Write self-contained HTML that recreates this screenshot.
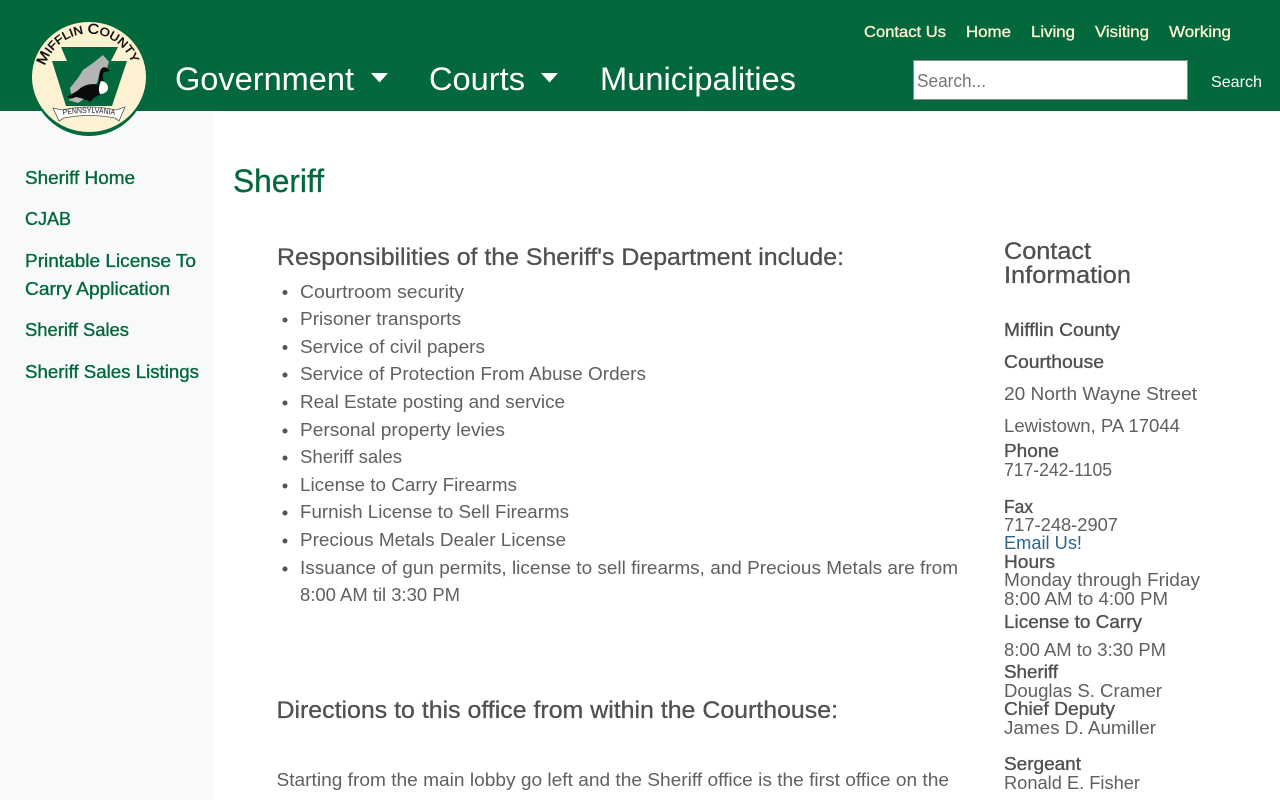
<!DOCTYPE html>
<html lang="en"><head><meta charset="utf-8"><title>Sheriff - Mifflin County</title>
<style>
html,body{margin:0;padding:0;width:1280px;height:800px;overflow:hidden;background:#fff}
svg{display:block}
text{font-family:"Liberation Sans",sans-serif;font-size:18px;fill:#606060}
.g{fill:#03683c;stroke:#03683c;stroke-width:.35}
.b{fill:#505050;stroke:#505050;stroke-width:.35}
.h{font-size:24px;fill:#505050;stroke:#505050;stroke-width:.3}
.t{font-size:16px;fill:#fbf3cf;stroke:#fbf3cf;stroke-width:.35}
.n{font-size:32px;fill:#fff}
</style></head><body>
<svg width="1280" height="800" viewBox="0 0 1280 800" xmlns="http://www.w3.org/2000/svg">
<rect x="0" y="111" width="213" height="689" fill="#f8f9fa"/>
<rect width="1280" height="111" fill="#03683c"/>

<!-- logo -->
<circle cx="89" cy="78" r="58" fill="#03683c"/>
<ellipse cx="89" cy="77" rx="57" ry="55" fill="#fdf3d2"/>
<path d="M61 47H118L111 61H127L112 106H66L52 61H67Z" fill="#03683c"/>
<path d="M70 88L78 78L83 70L93 63L103 55L109 62L107 68L100 72L97 83L80 92L71 94Z" fill="#b4b4b4"/>
<path d="M67 97L77 91C84 84 92 83 98 85C100 78 98 72 102 68C105 66 107 68 110 71L104 72C102 76 103 78 104 82C102 88 100 92 101 94L94 98L90 102L87 100H80L74 99Z" fill="#0a0a0a"/>
<path d="M101 81C105 81 108 84 108 88C108 91 105 94 100 94C98 90 99 85 101 81Z" fill="#fff"/>
<path d="M68 100L76 97L84 99L78 103Z" fill="#b8b8b8"/>
<path d="M53 108L62 110Q89 104 116 110L125 107L119 121L115 118Q89 113 64 118L59 121Z" fill="#fff" stroke="#555" stroke-width=".8"/>
<defs>
<path id="arcTop" d="M45 66A46 46 0 0 1 133 66"/>
<path id="arcBan" d="M63 115Q89 111 115 115"/>
</defs>
<text style="font-size:11.5px;fill:#111;stroke:#111;stroke-width:.45"><textPath href="#arcTop" textLength="114" lengthAdjust="spacingAndGlyphs"><tspan style="font-size:14px">M</tspan>IFFLIN <tspan style="font-size:14px">C</tspan>OUNTY</textPath></text>
<text style="font-size:8px;fill:#222"><textPath href="#arcBan" textLength="52" lengthAdjust="spacingAndGlyphs">PENNSYLVANIA</textPath></text>

<!-- top links -->
<text class="t" x="864" y="37" textLength="82" lengthAdjust="spacingAndGlyphs">Contact Us</text>
<text class="t" x="966" y="37" textLength="45" lengthAdjust="spacingAndGlyphs">Home</text>
<text class="t" x="1031" y="37" textLength="44" lengthAdjust="spacingAndGlyphs">Living</text>
<text class="t" x="1095" y="37" textLength="54" lengthAdjust="spacingAndGlyphs">Visiting</text>
<text class="t" x="1169" y="37" textLength="62" lengthAdjust="spacingAndGlyphs">Working</text>

<!-- main nav -->
<text class="n" x="175" y="90" textLength="179" lengthAdjust="spacingAndGlyphs">Government</text>
<path d="M371 73H388L379.5 82.500Z" fill="#fff"/>
<text class="n" x="429" y="90" textLength="96" lengthAdjust="spacingAndGlyphs">Courts</text>
<path d="M541 73H558L549.500 82.500Z" fill="#fff"/>
<text class="n" x="600" y="90" textLength="196" lengthAdjust="spacingAndGlyphs">Municipalities</text>

<!-- search -->
<rect x="913.500" y="60.500" width="274" height="39" fill="#fff" stroke="#8a8a8a"/>
<text x="917" y="87" textLength="69" lengthAdjust="spacingAndGlyphs" style="fill:#757575">Search...</text>
<text x="1211" y="87" textLength="51" lengthAdjust="spacingAndGlyphs" style="font-size:16px;fill:#fff">Search</text>

<!-- sidebar -->
<text class="g" x="25" y="184" textLength="110" lengthAdjust="spacingAndGlyphs">Sheriff Home</text>
<text class="g" x="25" y="225" textLength="46" lengthAdjust="spacingAndGlyphs">CJAB</text>
<text class="g" x="25" y="267" textLength="171" lengthAdjust="spacingAndGlyphs">Printable License To</text>
<text class="g" x="25" y="295" textLength="145" lengthAdjust="spacingAndGlyphs">Carry Application</text>
<text class="g" x="25" y="336" textLength="104" lengthAdjust="spacingAndGlyphs">Sheriff Sales</text>
<text class="g" x="25" y="378" textLength="174" lengthAdjust="spacingAndGlyphs">Sheriff Sales Listings</text>

<!-- main -->
<text x="233" y="192" textLength="91" lengthAdjust="spacingAndGlyphs" style="font-size:32px;fill:#03683c;stroke:#03683c;stroke-width:.3">Sheriff</text>
<text class="h" x="277" y="265" textLength="567" lengthAdjust="spacingAndGlyphs">Responsibilities of the Sheriff's Department include:</text>

<g fill="#555">
<circle cx="285" cy="292.500" r="2.500"/><circle cx="285" cy="320" r="2.500"/><circle cx="285" cy="347.500" r="2.500"/><circle cx="285" cy="375" r="2.500"/><circle cx="285" cy="403" r="2.500"/><circle cx="285" cy="431" r="2.500"/><circle cx="285" cy="458" r="2.500"/><circle cx="285" cy="486" r="2.500"/><circle cx="285" cy="513" r="2.500"/><circle cx="285" cy="541" r="2.500"/><circle cx="285" cy="569" r="2.500"/>
</g>
<text x="300" y="298" textLength="164" lengthAdjust="spacingAndGlyphs">Courtroom security</text>
<text x="300" y="325" textLength="161" lengthAdjust="spacingAndGlyphs">Prisoner transports</text>
<text x="300" y="353" textLength="185" lengthAdjust="spacingAndGlyphs">Service of civil papers</text>
<text x="300" y="380" textLength="346" lengthAdjust="spacingAndGlyphs">Service of Protection From Abuse Orders</text>
<text x="300" y="408" textLength="265" lengthAdjust="spacingAndGlyphs">Real Estate posting and service</text>
<text x="300" y="436" textLength="205" lengthAdjust="spacingAndGlyphs">Personal property levies</text>
<text x="300" y="463" textLength="102" lengthAdjust="spacingAndGlyphs">Sheriff sales</text>
<text x="300" y="491" textLength="217" lengthAdjust="spacingAndGlyphs">License to Carry Firearms</text>
<text x="300" y="518" textLength="269" lengthAdjust="spacingAndGlyphs">Furnish License to Sell Firearms</text>
<text x="300" y="546" textLength="266" lengthAdjust="spacingAndGlyphs">Precious Metals Dealer License</text>
<text x="300" y="574" textLength="658" lengthAdjust="spacingAndGlyphs">Issuance of gun permits, license to sell firearms, and Precious Metals are from</text>
<text x="300" y="601" textLength="160" lengthAdjust="spacingAndGlyphs">8:00 AM til 3:30 PM</text>

<text class="h" x="276.500" y="718" textLength="561.500" lengthAdjust="spacingAndGlyphs">Directions to this office from within the Courthouse:</text>
<text x="276.500" y="786" textLength="672.500" lengthAdjust="spacingAndGlyphs">Starting from the main lobby go left and the Sheriff office is the first office on the</text>

<!-- contact -->
<text class="h" x="1004" y="259" textLength="87" lengthAdjust="spacingAndGlyphs">Contact</text>
<text class="h" x="1004" y="283" textLength="127" lengthAdjust="spacingAndGlyphs">Information</text>
<text class="b" x="1004" y="336" textLength="116" lengthAdjust="spacingAndGlyphs">Mifflin County</text>
<text class="b" x="1004" y="368" textLength="100" lengthAdjust="spacingAndGlyphs">Courthouse</text>
<text x="1004" y="400" textLength="193" lengthAdjust="spacingAndGlyphs">20 North Wayne Street</text>
<text x="1004" y="432" textLength="176" lengthAdjust="spacingAndGlyphs">Lewistown, PA 17044</text>
<text class="b" x="1004" y="457" textLength="55" lengthAdjust="spacingAndGlyphs">Phone</text>
<text x="1004" y="476" textLength="108" lengthAdjust="spacingAndGlyphs">717-242-1105</text>
<text class="b" x="1004" y="513" textLength="29" lengthAdjust="spacingAndGlyphs">Fax</text>
<text x="1004" y="531" textLength="114" lengthAdjust="spacingAndGlyphs">717-248-2907</text>
<text x="1004" y="549" textLength="78" lengthAdjust="spacingAndGlyphs" style="fill:#2f6490">Email Us!</text>
<text class="b" x="1004" y="568" textLength="51" lengthAdjust="spacingAndGlyphs">Hours</text>
<text x="1004" y="586" textLength="196" lengthAdjust="spacingAndGlyphs">Monday through Friday</text>
<text x="1004" y="605" textLength="164" lengthAdjust="spacingAndGlyphs">8:00 AM to 4:00 PM</text>
<text class="b" x="1004" y="628" textLength="138" lengthAdjust="spacingAndGlyphs">License to Carry</text>
<text x="1004" y="656" textLength="162" lengthAdjust="spacingAndGlyphs">8:00 AM to 3:30 PM</text>
<text class="b" x="1004" y="678" textLength="54" lengthAdjust="spacingAndGlyphs">Sheriff</text>
<text x="1004" y="697" textLength="158" lengthAdjust="spacingAndGlyphs">Douglas S. Cramer</text>
<text class="b" x="1004" y="715" textLength="111" lengthAdjust="spacingAndGlyphs">Chief Deputy</text>
<text x="1004" y="734" textLength="152" lengthAdjust="spacingAndGlyphs">James D. Aumiller</text>
<text class="b" x="1004" y="770" textLength="77" lengthAdjust="spacingAndGlyphs">Sergeant</text>
<text x="1004" y="789" textLength="136" lengthAdjust="spacingAndGlyphs">Ronald E. Fisher</text>
</svg>
</body></html>
